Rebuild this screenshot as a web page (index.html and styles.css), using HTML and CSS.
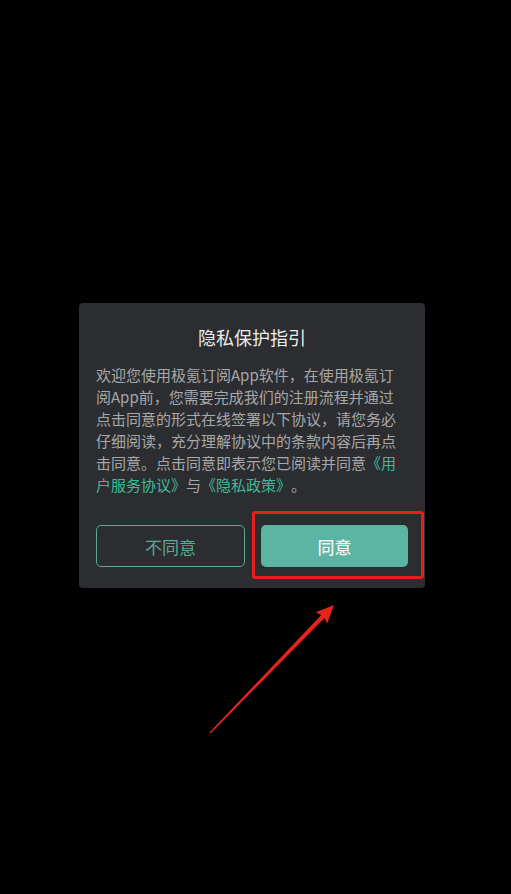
FILE: index.html
```html
<!DOCTYPE html>
<html lang="zh-CN">
<head>
<meta charset="utf-8">
<title>隐私保护指引</title>
<link rel="stylesheet" href="styles.css">
</head>
<body>
<div class="screen">
  <div class="dialog">
    <h1 class="title">隐私保护指引</h1>
    <p class="content">欢迎您使用极氪订阅App软件，在使用极氪订阅App前，您需要完成我们的注册流程并通过点击同意的形式在线签署以下协议，请您务必仔细阅读，充分理解协议中的条款内容后再点击同意。点击同意即表示您已阅读并同意<span class="link">《用户服务协议》</span>与<span class="link">《隐私政策》</span>。</p>
    <div class="actions">
      <button class="btn btn-outline">不同意</button>
      <button class="btn btn-primary">同意</button>
    </div>
  </div>
  <div class="highlight"></div>
  <svg class="arrow" width="511" height="894" viewBox="0 0 511 894">
    <polygon points="209,733 321.2,615 315.7,612.3 334,605 327.1,623.5 324.4,618 211,733" fill="#e8231d"/>
  </svg>
</div>
</body>
</html>
```
FILE: styles.css
```css
* { box-sizing: border-box; }
html, body { margin: 0; padding: 0; background: #000; }
body {
  width: 511px;
  height: 894px;
  overflow: hidden;
  font-family: "Noto Sans CJK SC", "Noto Sans", sans-serif;
  text-spacing-trim: space-all;
  font-feature-settings: "halt" 0, "chws" 0;
}
.screen { position: relative; width: 511px; height: 894px; padding: 303px 0 0 79px; }
.dialog {
  width: 346px;
  background: #2b2d30;
  border-radius: 4px;
  padding: 22px 17px 21px;
}
.title {
  margin: 0;
  font-size: 18px;
  font-weight: 400;
  line-height: 24px;
  text-align: center;
  color: #ececec;
}
.content {
  margin: 15px 0 0;
  font-size: 15px;
  line-height: 22px;
  color: #a8a8a8;
}
.link { color: #3dbb97; }
.actions {
  display: flex;
  gap: 16px;
  margin-top: 29px;
}
.btn {
  flex: 1;
  height: 42px;
  border-radius: 5px;
  font-family: inherit;
  font-size: 17px;
  padding: 0;
}
.btn-outline {
  background: transparent;
  border: 1.5px solid #5ea894;
  color: #5ea894;
}
.btn-primary {
  background: #5cb4a2;
  border: none;
  color: #f2f2f2;
  font-weight: 500;
}
.highlight {
  position: absolute;
  left: 252px;
  top: 511px;
  width: 172px;
  height: 68px;
  border: 3px solid #e3201c;
  border-radius: 3px;
}
.arrow { position: absolute; left: 0; top: 0; pointer-events: none; }
```
